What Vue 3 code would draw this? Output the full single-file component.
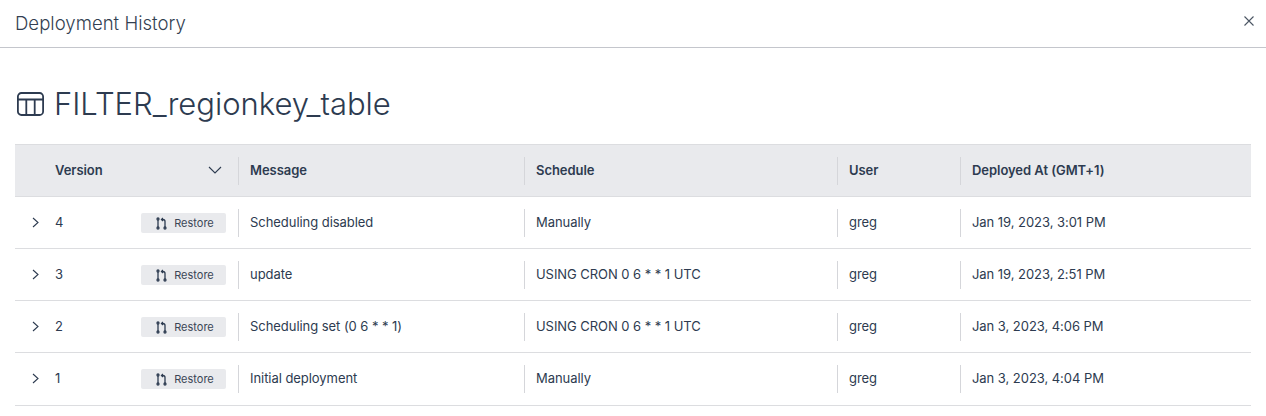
<template>
  <div class="page">
    <header class="top-bar">
      <span class="top-title">Deployment History</span>
      <button class="close-btn">
        <svg width="12" height="12" viewBox="0 0 12 12"><path d="M1.5 1.5l9 9M10.5 1.5l-9 9" stroke="#4b5563" stroke-width="1.1" fill="none" /></svg>
      </button>
    </header>
    <div class="content">
      <h1 class="model-name">
        <svg class="table-icon" width="30" height="24" viewBox="0 0 30 24" fill="none" stroke="#2d3b50" stroke-width="1.8">
          <rect x="2.9" y="1" width="25.2" height="22" rx="3.5" />
          <path d="M2.9 7.5h25.2M11.3 7.5V23M19.7 7.5V23" />
        </svg>
        FILTER_regionkey_table
      </h1>
      <div class="table">
        <div class="row head">
          <div class="cell version-cell">
            <span class="version-label">Version</span>
            <svg class="sort" width="14" height="8" viewBox="0 0 14 8"><path d="M1 1l6 6 6-6" stroke="#2d3b50" stroke-width="1.1" fill="none" /></svg>
          </div>
          <div class="cell"><span class="sep"></span>Message</div>
          <div class="cell"><span class="sep"></span>Schedule</div>
          <div class="cell"><span class="sep"></span>User</div>
          <div class="cell"><span class="sep"></span>Deployed At (GMT+1)</div>
        </div>
        <div class="row body" v-for="d in deployments" :key="d.version">
          <div class="cell version-cell">
            <svg class="expand" width="7" height="11" viewBox="0 0 7 11"><path d="M1 1l5 4.5-5 4.5" stroke="#2d3b50" stroke-width="1.1" fill="none" /></svg>
            <span class="version-label">{{ d.version }}</span>
            <button class="restore">
              <svg width="11" height="13" viewBox="0 0 11 13" fill="none" stroke="#2d3b50" stroke-width="1.3">
                <circle cx="2" cy="11" r="1" />
                <circle cx="9" cy="11" r="1" />
                <circle cx="2" cy="2" r="1" />
                <path d="M2 3v7M9 10V4.5Q9 2.5 7 2.5H5.5M7 1L5.5 2.5 7 4" />
              </svg>
              Restore
            </button>
          </div>
          <div class="cell"><span class="sep"></span>{{ d.message }}</div>
          <div class="cell"><span class="sep"></span>{{ d.schedule }}</div>
          <div class="cell"><span class="sep"></span>{{ d.user }}</div>
          <div class="cell"><span class="sep"></span>{{ d.date }}</div>
        </div>
      </div>
    </div>
  </div>
</template>

<script setup>
const deployments = [
  { version: 4, message: 'Scheduling disabled', schedule: 'Manually', user: 'greg', date: 'Jan 19, 2023, 3:01 PM' },
  { version: 3, message: 'update', schedule: 'USING CRON 0 6 * * 1 UTC', user: 'greg', date: 'Jan 19, 2023, 2:51 PM' },
  { version: 2, message: 'Scheduling set (0 6 * * 1)', schedule: 'USING CRON 0 6 * * 1 UTC', user: 'greg', date: 'Jan 3, 2023, 4:06 PM' },
  { version: 1, message: 'Initial deployment', schedule: 'Manually', user: 'greg', date: 'Jan 3, 2023, 4:04 PM' }
]
</script>

<style>
html, body {
  margin: 0;
  background: #fff;
}
</style>

<style scoped>
.page {
  width: 1266px;
  height: 416px;
  overflow: hidden;
  font-family: Inter, "Open Sans", sans-serif;
  font-feature-settings: "calt" 0;
  color: #2d3b50;
}
.top-bar {
  height: 48px;
  border-bottom: 1px solid #c4c6cc;
  display: flex;
  align-items: center;
  justify-content: space-between;
  padding: 0 11px 0 15px;
  box-sizing: border-box;
}
.top-title {
  font-size: 18.6px;
  font-weight: 300;
  color: #333f52;
  margin-bottom: 2px;
}
.close-btn {
  background: none;
  border: none;
  padding: 0;
  margin-bottom: 5px;
  display: flex;
}
.content {
  padding: 0 15px;
}
.model-name {
  margin: 0;
  height: 96px;
  display: flex;
  align-items: center;
  gap: 9px;
  font-size: 31px;
  font-weight: 300;
  color: #2d3b50;
  padding-top: 14px;
  box-sizing: border-box;
}
.table-icon {
  margin-top: 1px;
}
.row {
  display: grid;
  grid-template-columns: 223px 286px 313px 123px 1fr;
  align-items: center;
  border-bottom: 1px solid #dcdde0;
  box-sizing: border-box;
  font-size: 13px;
}
.head {
  height: 53px;
  background: #e9eaed;
  border-top: 1px solid #dcdde0;
  font-weight: 600;
}
.body {
  height: 52px;
}
.body:last-child {
  height: 53px;
  padding-bottom: 1px;
}
.cell {
  position: relative;
  display: flex;
  align-items: center;
  padding-left: 12px;
  padding-bottom: 1px;
  box-sizing: border-box;
  height: 28px;
  letter-spacing: -0.05px;
}
.sep {
  position: absolute;
  left: 0;
  top: 0;
  bottom: 0;
  width: 1px;
  background: #d5d6da;
}
.version-cell {
  padding-left: 40px;
  padding-right: 12px;
}
.version-label {
  flex: 1;
}
.sort {
  margin-right: 4px;
}
.expand {
  position: absolute;
  left: 17px;
  top: 8px;
}
.restore {
  display: flex;
  align-items: center;
  justify-content: center;
  gap: 7px;
  width: 85px;
  height: 20px;
  padding: 0 0 0 3px;
  margin-top: 2px;
  background: #e9eaed;
  border: none;
  border-radius: 2px;
  font-family: inherit;
  font-size: 11px;
  color: #3b4656;
}
</style>
